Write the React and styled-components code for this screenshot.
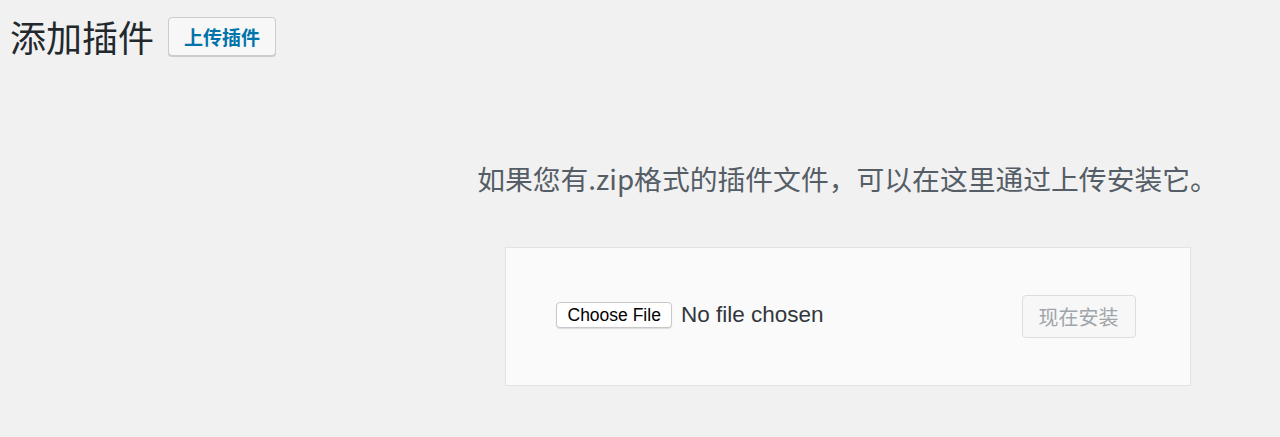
import React from "react";
import styled, { createGlobalStyle } from "styled-components";

const GlobalStyle = createGlobalStyle`
  html, body {
    margin: 0;
    padding: 0;
    background: #f1f1f1;
  }
  body {
    font-family: "Noto Sans CJK SC", "Noto Sans", sans-serif;
    color: #23282d;
  }
`;

const Page = styled.div`
  min-height: 437px;
`;

const Header = styled.header`
  display: flex;
  align-items: center;
  gap: 14px;
  padding: 17px 0 0 10px;
`;

const Title = styled.h1`
  margin: 0;
  font-size: 36px;
  font-weight: 400;
  line-height: 39px;
  color: #23282d;
`;

const ActionButton = styled.button`
  height: 39px;
  padding: 0 15px;
  font-family: "Noto Sans CJK SC", sans-serif;
  font-size: 19px;
  font-weight: 700;
  color: #0073aa;
  background: #f7f7f7;
  border: 1px solid #ccc;
  border-radius: 4px;
  box-shadow: 0 1px 0 #ccc;
  cursor: pointer;
`;

const UploadSection = styled.section`
  display: flex;
  flex-direction: column;
  align-items: center;
  padding-left: 415px;
`;

const Help = styled.p`
  margin: 104px 0 0;
  font-size: 27.8px;
  line-height: 36px;
  color: #555d66;
  white-space: nowrap;
`;

const UploadForm = styled.form`
  box-sizing: border-box;
  width: 686px;
  height: 139px;
  margin-top: 51px;
  padding: 0 54px 0 50px;
  display: flex;
  align-items: center;
  justify-content: space-between;
  background: #fafafa;
  border: 1px solid #e2e2e2;
`;

const FileGroup = styled.div`
  display: flex;
  align-items: center;
  gap: 9px;
  margin-bottom: 3px;
`;

const ChooseButton = styled.button`
  box-sizing: border-box;
  height: 26px;
  padding: 0 10px 0 11px;
  font-family: "Liberation Sans", Arial, sans-serif;
  font-size: 17.5px;
  color: #000;
  background: #fff;
  border: 1px solid #c8c8c8;
  border-radius: 4px;
  box-shadow: 0 1px 1px rgba(0, 0, 0, 0.12);
`;

const FileName = styled.span`
  font-family: "Liberation Sans", Arial, sans-serif;
  font-size: 22.5px;
  color: #32373c;
`;

const InstallButton = styled.button`
  box-sizing: border-box;
  height: 43px;
  padding: 0 16px;
  font-family: "Noto Sans CJK SC", sans-serif;
  font-size: 20px;
  color: #a0a5aa;
  background: #f7f7f7;
  border: 1px solid #ddd;
  border-radius: 4px;
`;

export default function App() {
  return (
    <>
      <GlobalStyle />
      <Page>
        <Header>
          <Title>添加插件</Title>
          <ActionButton type="button">上传插件</ActionButton>
        </Header>
        <UploadSection>
          <Help>如果您有.zip格式的插件文件，可以在这里通过上传安装它。</Help>
          <UploadForm onSubmit={(e) => e.preventDefault()}>
            <FileGroup>
              <ChooseButton type="button">Choose File</ChooseButton>
              <FileName>No file chosen</FileName>
            </FileGroup>
            <InstallButton type="submit" disabled>
              现在安装
            </InstallButton>
          </UploadForm>
        </UploadSection>
      </Page>
    </>
  );
}
